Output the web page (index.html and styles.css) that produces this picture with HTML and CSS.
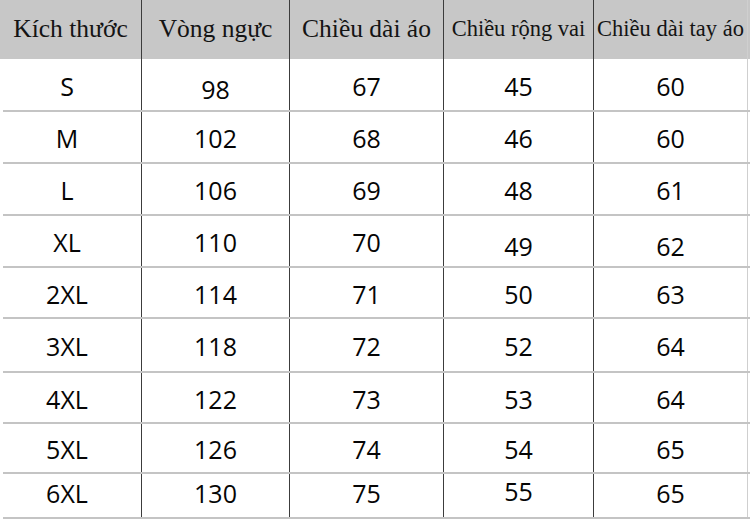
FILE: index.html
```html
<!DOCTYPE html>
<html lang="vi">
<head>
<meta charset="utf-8">
<title>Bảng kích thước</title>
<link rel="stylesheet" href="styles.css">
</head>
<body>
<div class="sheet">
  <div class="row head">
    <div class="cell">Kích thước</div>
    <div class="cell">Vòng ngực</div>
    <div class="cell">Chiều dài áo</div>
    <div class="cell sm">Chiều rộng vai</div>
    <div class="cell sm">Chiều dài tay áo</div>
  </div>
  <div class="row body"><div class="cell">S</div><div class="cell low">98</div><div class="cell">67</div><div class="cell">45</div><div class="cell">60</div></div>
  <div class="row body"><div class="cell">M</div><div class="cell">102</div><div class="cell">68</div><div class="cell">46</div><div class="cell">60</div></div>
  <div class="row body"><div class="cell">L</div><div class="cell">106</div><div class="cell">69</div><div class="cell">48</div><div class="cell">61</div></div>
  <div class="row body"><div class="cell">XL</div><div class="cell">110</div><div class="cell">70</div><div class="cell low">49</div><div class="cell low">62</div></div>
  <div class="row body"><div class="cell">2XL</div><div class="cell">114</div><div class="cell">71</div><div class="cell">50</div><div class="cell">63</div></div>
  <div class="row body"><div class="cell">3XL</div><div class="cell">118</div><div class="cell">72</div><div class="cell">52</div><div class="cell">64</div></div>
  <div class="row body"><div class="cell">4XL</div><div class="cell">122</div><div class="cell">73</div><div class="cell">53</div><div class="cell">64</div></div>
  <div class="row body"><div class="cell">5XL</div><div class="cell">126</div><div class="cell">74</div><div class="cell">54</div><div class="cell">65</div></div>
  <div class="row body last"><div class="cell">6XL</div><div class="cell">130</div><div class="cell">75</div><div class="cell high">55</div><div class="cell">65</div></div>
</div>
</body>
</html>
```
FILE: styles.css
```css
html, body {
  margin: 0;
  padding: 0;
  background: #ffffff;
}
.sheet {
  width: 750px;
  height: 519px;
  overflow: hidden;
  background: #ffffff;
  color: #111111;
}
.row {
  display: grid;
  grid-template-columns: 141px 148px 154px 150px 155px 2px;
}
.row::after {
  content: "";
}
.cell {
  display: flex;
  align-items: center;
  justify-content: center;
  white-space: nowrap;
}
.cell + .cell {
  border-left: 1px solid #3c3c3c;
}
.row .cell:last-child {
  border-right: 1px solid #cfcfcf;
}
.head {
  height: 59px;
  background: #c7c7c7;
  font-family: "Liberation Serif", "DejaVu Serif", serif;
  font-size: 25.5px;
  color: #141414;
}
.head .cell {
  padding-bottom: 2px;
}
.head .sm {
  font-size: 22.5px;
}
.body {
  margin-left: 3px;
  margin-right: 0;
  grid-template-columns: 138px 148px 154px 150px 155px 2px;
  border-bottom: 2px solid #c4c4c4;
  font-family: "Open Sans", "Noto Sans", sans-serif;
  font-size: 25px;
  font-weight: 500;
  color: #050505;
}
.body .cell {
  padding-top: 2px;
}
.body .cell:first-child {
  padding-right: 10px;
}
.body .low {
  padding-top: 9px;
}
.body.last .cell {
  padding-top: 0;
  padding-bottom: 5px;
}
.body.last .high {
  padding-bottom: 9px;
}
.body:nth-child(2) { height: 51px; }
.body:nth-child(3) { height: 50px; }
.body:nth-child(4) { height: 50px; }
.body:nth-child(5) { height: 50px; }
.body:nth-child(6) { height: 49px; }
.body:nth-child(7) { height: 52px; }
.body:nth-child(8) { height: 49px; }
.body:nth-child(9) { height: 48px; }
.body:nth-child(10) { height: 43px; }
```
